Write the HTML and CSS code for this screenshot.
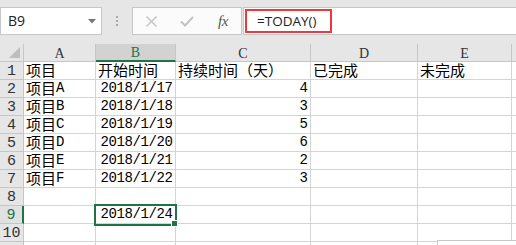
FILE: index.html
```html
<!DOCTYPE html>
<html lang="zh">
<head>
<meta charset="utf-8">
<title>Excel</title>
<link rel="stylesheet" href="styles.css">
</head>
<body>
<div class="app">
  <div class="toolbar">
    <div class="namebox">
      <span class="name">B9</span>
      <svg class="caret" width="8" height="5" viewBox="0 0 8 5"><polygon points="0,0 8,0 4,4.5" fill="#777"/></svg>
    </div>
    <div class="grip"><i></i><i></i><i></i></div>
    <div class="fbtns">
      <span class="fb"><svg width="13" height="11" viewBox="0 0 13 11"><path d="M1.5 0.5 L11.5 10.5 M11.5 0.5 L1.5 10.5" stroke="#c2c2c2" stroke-width="1.4" fill="none"/></svg></span>
      <span class="fb"><svg width="14" height="11" viewBox="0 0 14 11"><path d="M1 5.5 L5 9.5 L13 1" stroke="#c2c2c2" stroke-width="2" fill="none"/></svg></span>
      <span class="fb fx">fx</span>
    </div>
    <div class="fbox"><span class="formula">=TODAY()</span></div>
  </div>

  <div class="sheet">
    <div class="c h corner"><svg width="11" height="11" viewBox="0 0 11 11"><polygon points="11,0 11,11 0,11" fill="#bdbdbd"/></svg></div>
    <div class="c h col">A</div>
    <div class="c h col on">B</div>
    <div class="c h col">C</div>
    <div class="c h col">D</div>
    <div class="c h col">E</div>
    <div class="c h col"></div>

    <div class="c h r">1</div>
    <div class="c"><span class="zh">项目</span></div>
    <div class="c"><span class="zh">开始时间</span></div>
    <div class="c"><span class="zh">持续时间（天）</span></div>
    <div class="c"><span class="zh">已完成</span></div>
    <div class="c"><span class="zh">未完成</span></div>
    <div class="c"></div>

    <div class="c h r">2</div>
    <div class="c"><span class="zh">项目</span>A</div>
    <div class="c n">2018/1/17</div>
    <div class="c n">4</div>
    <div class="c"></div>
    <div class="c"></div>
    <div class="c"></div>

    <div class="c h r">3</div>
    <div class="c"><span class="zh">项目</span>B</div>
    <div class="c n">2018/1/18</div>
    <div class="c n">3</div>
    <div class="c"></div>
    <div class="c"></div>
    <div class="c"></div>

    <div class="c h r">4</div>
    <div class="c"><span class="zh">项目</span>C</div>
    <div class="c n">2018/1/19</div>
    <div class="c n">5</div>
    <div class="c"></div>
    <div class="c"></div>
    <div class="c"></div>

    <div class="c h r">5</div>
    <div class="c"><span class="zh">项目</span>D</div>
    <div class="c n">2018/1/20</div>
    <div class="c n">6</div>
    <div class="c"></div>
    <div class="c"></div>
    <div class="c"></div>

    <div class="c h r">6</div>
    <div class="c"><span class="zh">项目</span>E</div>
    <div class="c n">2018/1/21</div>
    <div class="c n">2</div>
    <div class="c"></div>
    <div class="c"></div>
    <div class="c"></div>

    <div class="c h r">7</div>
    <div class="c"><span class="zh">项目</span>F</div>
    <div class="c n">2018/1/22</div>
    <div class="c n">3</div>
    <div class="c"></div>
    <div class="c"></div>
    <div class="c"></div>

    <div class="c h r">8</div>
    <div class="c"></div>
    <div class="c"></div>
    <div class="c"></div>
    <div class="c"></div>
    <div class="c"></div>
    <div class="c"></div>

    <div class="c h r on">9</div>
    <div class="c"></div>
    <div class="c n">2018/1/24</div>
    <div class="c"></div>
    <div class="c"></div>
    <div class="c"></div>
    <div class="c"></div>

    <div class="c h r">10</div>
    <div class="c"></div>
    <div class="c"></div>
    <div class="c"></div>
    <div class="c"></div>
    <div class="c"></div>
    <div class="c"></div>

    <div class="c h r"></div>
    <div class="c"></div>
    <div class="c"></div>
    <div class="c"></div>
    <div class="c"></div>
    <div class="c"></div>
    <div class="c"></div>

    <div class="sel"><i class="handle"></i></div>
    <div class="hscroll"></div>
  </div>
</div>
</body>
</html>
```

FILE: styles.css
```css
html, body {
  margin: 0;
  padding: 0;
  background: #ffffff;
  overflow: hidden;
}

.app {
  width: 516px;
  height: 245px;
  overflow: hidden;
  background: #ffffff;
}

/* ---------- formula toolbar ---------- */
.toolbar {
  height: 44px;
  box-sizing: border-box;
  padding-top: 7px;
  background: #e6e6e6;
  display: flex;
  align-items: flex-start;
}

.namebox {
  width: 102px;
  height: 28px;
  box-sizing: border-box;
  background: #ffffff;
  border: 1px solid #c6c6c6;
  display: flex;
  align-items: center;
  justify-content: space-between;
  padding: 0 5px 0 7px;
}

.name {
  font-family: "Open Sans", "Noto Sans", sans-serif;
  font-size: 14px;
  color: #222;
  line-height: 1;
}

.caret {
  display: block;
}

.grip {
  width: 30px;
  height: 28px;
  display: flex;
  flex-direction: column;
  align-items: center;
  justify-content: center;
  gap: 2px;
}

.grip i {
  display: block;
  width: 2px;
  height: 2px;
  background: #a8a8a8;
}

.fbtns {
  width: 110px;
  height: 28px;
  box-sizing: border-box;
  background: #fbfbfb;
  border: 1px solid #c6c6c6;
  display: flex;
  align-items: center;
}

.fb {
  width: 36px;
  display: flex;
  align-items: center;
  justify-content: center;
}

.fb svg {
  display: block;
}

.fx {
  font-family: "Liberation Serif", serif;
  font-style: italic;
  font-size: 15px;
  color: #555555;
  line-height: 1;
  letter-spacing: -0.5px;
}

.fbox {
  flex: 1;
  margin-left: 1px;
  height: 28px;
  box-sizing: border-box;
  background: #ffffff;
  border: 1px solid #c6c6c6;
  border-right: none;
  padding: 1px 0 0 1px;
}

.formula {
  display: flex;
  align-items: center;
  width: 87px;
  height: 24px;
  box-sizing: border-box;
  border: 2px solid #ea3a3f;
  padding-left: 10px;
  font-family: "Open Sans", "Noto Sans", sans-serif;
  font-size: 13.5px;
  color: #222;
}

/* ---------- sheet grid ---------- */
.sheet {
  position: relative;
  display: grid;
  grid-template-columns: 24px 72px 80px 135px 107px 94px 1fr;
  grid-auto-rows: 18px;
}

.c {
  box-sizing: border-box;
  border-right: 1px solid #d4d4d4;
  border-bottom: 1px solid #d4d4d4;
  display: flex;
  align-items: flex-end;
  padding: 0 2px 1px 2px;
  white-space: nowrap;
  font-family: "Liberation Mono", "Noto Sans CJK SC", monospace;
  font-size: 14px;
  letter-spacing: -0.4px;
  line-height: 15px;
  color: #000000;
}

.zh {
  font-family: "Noto Sans CJK SC", sans-serif;
  font-size: 15px;
  letter-spacing: 0;
  line-height: 16px;
}

.n {
  justify-content: flex-end;
  padding-right: 2.4px;
}

.h {
  background: #e6e6e6;
  border-color: #c6c6c6;
  justify-content: center;
  align-items: center;
  padding: 0;
  letter-spacing: 0;
  color: #333333;
}

.h.col {
  font-family: "Liberation Serif", serif;
  font-size: 14px;
  padding-top: 1px;
}

.h.on {
  background: #d2d2d2;
  color: #217346;
  border-bottom: 2px solid #217346;
}

.h.r {
  font-size: 15px;
  align-items: flex-end;
}

.h.r.on {
  background: #e1e1e1;
  border-bottom: 1px solid #c6c6c6;
  border-right: 2px solid #217346;
}

.corner {
  justify-content: flex-end;
  align-items: flex-end;
  padding: 0 3px 3px 0;
}

.corner svg {
  display: block;
}

/* selection overlay on B9 */
.sel {
  position: absolute;
  left: 94px;
  top: 160px;
  width: 83px;
  height: 22px;
  box-sizing: border-box;
  border: 2px solid #217346;
}

.handle {
  position: absolute;
  right: -3px;
  bottom: -3px;
  width: 5px;
  height: 5px;
  background: #217346;
  border: 1px solid #ffffff;
}

/* scrollbar edge peeking in at the bottom right */
.hscroll {
  position: absolute;
  left: 437px;
  top: 196px;
  width: 79px;
  height: 10px;
  box-sizing: border-box;
  background: #ffffff;
  border-top: 1px solid #c6c6c6;
  border-left: 1px solid #c6c6c6;
}
```
